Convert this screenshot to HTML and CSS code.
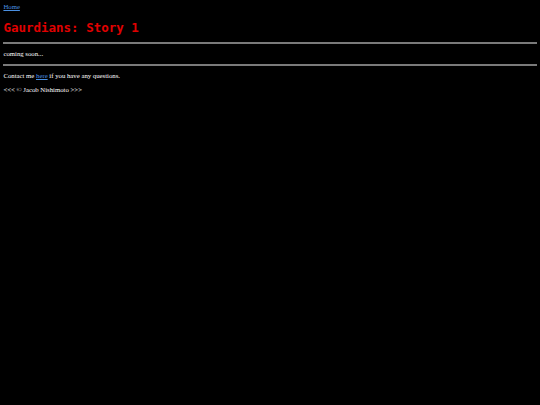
FILE: index.html
```html
<!DOCTYPE html>
<html>
<head>
<meta charset="utf-8">
<link rel="stylesheet" href="styles.css">
</head>
<body class="page">
<a class="link" href="#">Home</a>
<h1 class="title">Gaurdians: Story 1</h1>
<hr class="rule">
<p class="text">coming soon...</p>
<hr class="rule">
<p class="text">Contact me <a class="link" href="#">here</a> if you have any questions.</p>
<p class="text">&lt;&lt;&lt; © Jacob Nishimoto &gt;&gt;&gt;</p>
</body>
</html>
```
FILE: styles.css
```css
html { background: #000; }
.page {
  margin: 3.4px;
  background: #000;
  color: #fff;
  font-family: "Liberation Serif", serif;
  font-size: 6.75px;
  line-height: 1.15;
}
.link { color: #4a90e2; text-decoration: underline; }
.title {
  font-family: "DejaVu Sans Mono", monospace;
  color: #e00000;
  font-size: 12.5px;
  font-weight: bold;
  margin: 9.5px 0 6.5px 0;
}
.rule {
  border: none;
  height: 2px;
  background: #7a7a7a;
  margin: 3.6px 0;
}
.text { margin: 6.3px 0; }
```
